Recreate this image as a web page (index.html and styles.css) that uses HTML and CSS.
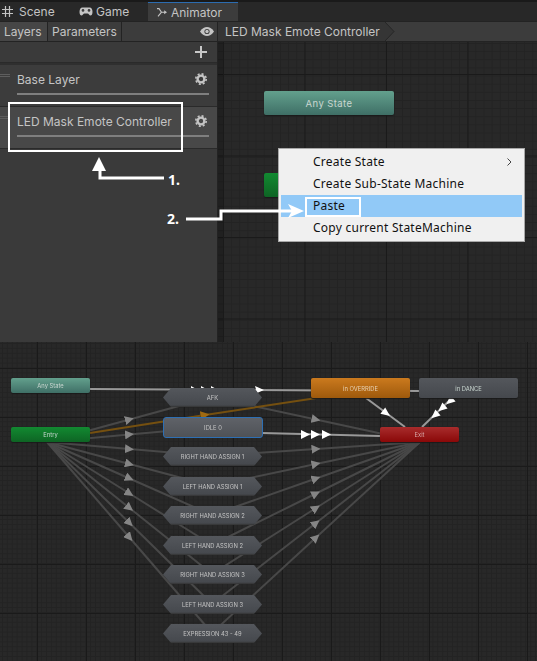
FILE: index.html
```html
<!DOCTYPE html>
<html lang="en">
<head>
    <meta charset="UTF-8">
    <meta name="viewport" content="width=device-width, initial-scale=1.0">
    <title>Animator</title>
    <link rel="stylesheet" href="styles.css">
</head>
<body>
    <div class="page">
        <div class="editor">
            <div class="tabs">
                <div class="tab tab-scene">
                    <svg class="tab-icon" width="11" height="11" viewBox="0 0 11 11"><path d="M3.5 0V11M7.5 0V11M0 3.5H11M0 7.5H11" stroke="#c4c4c4" stroke-width="1.2" fill="none"/></svg>
                    <span>Scene</span>
                </div>
                <div class="tab tab-game">
                    <svg class="tab-icon" width="14" height="9" viewBox="0 0 14 9"><path d="M3.5 0.5H10.5C12.5 0.5 13.5 2.5 13.5 5C13.5 7.5 12.5 8.5 11.5 8.5C10.2 8.5 9.8 6.5 8.5 6.5H5.5C4.2 6.5 3.8 8.5 2.5 8.5C1.5 8.5 0.5 7.5 0.5 5C0.5 2.5 1.5 0.5 3.5 0.5Z" fill="#c4c4c4"/><circle cx="4" cy="3.4" r="1.3" fill="#3c3c3c"/><circle cx="10" cy="3.4" r="1.3" fill="#3c3c3c"/></svg>
                    <span>Game</span>
                </div>
                <div class="tab tab-animator">
                    <svg class="tab-icon" width="10" height="9" viewBox="0 0 10 9"><path d="M0 0.6H2L4.5 4.2L1 8.4M4.5 4.2H8" stroke="#c4c4c4" stroke-width="1.1" fill="none"/><path d="M7.2 2.2L10 4.2L7.2 6.2Z" fill="#c4c4c4"/></svg>
                    <span>Animator</span>
                </div>
            </div>
            <div class="workspace">
                <div class="sidebar">
                    <div class="side-tabs">
                        <span class="side-tab side-tab-layers">Layers</span>
                        <span class="side-tab side-tab-params">Parameters</span>
                        <svg class="eye" width="14" height="9" viewBox="0 0 14 9"><path d="M0 4.5C2.5 1 4.5 0 7 0C9.5 0 11.5 1 14 4.5C11.5 8 9.5 9 7 9C4.5 9 2.5 8 0 4.5Z" fill="#c4c4c4"/><circle cx="7" cy="4.5" r="2.6" fill="#3c3c3c"/><circle cx="7" cy="4.5" r="1.7" fill="#c4c4c4"/></svg>
                    </div>
                    <div class="add-row">
                        <svg width="12" height="12" viewBox="0 0 12 12"><path d="M6 0V12M0 6H12" stroke="#c8c8c8" stroke-width="2"/></svg>
                    </div>
                    <div class="layer">
                        <span class="handle"></span>
                        <div class="layer-head">
                            <span class="layer-name">Base Layer</span>
                            <svg class="gear" width="12" height="12" viewBox="0 0 12 12"><circle cx="6" cy="6" r="3.4" fill="none" stroke="#c4c4c4" stroke-width="2.4"/><circle cx="6" cy="6" r="5.2" fill="none" stroke="#c4c4c4" stroke-width="1.6" stroke-dasharray="2.05 2.03"/></svg>
                        </div>
                        <div class="weight"></div>
                    </div>
                    <div class="layer layer-selected">
                        <span class="handle"></span>
                        <div class="layer-head">
                            <span class="layer-name">LED Mask Emote Controller</span>
                            <svg class="gear" width="12" height="12" viewBox="0 0 12 12"><circle cx="6" cy="6" r="3.4" fill="none" stroke="#c4c4c4" stroke-width="2.4"/><circle cx="6" cy="6" r="5.2" fill="none" stroke="#c4c4c4" stroke-width="1.6" stroke-dasharray="2.05 2.03"/></svg>
                        </div>
                        <div class="weight"></div>
                    </div>
                </div>
                <div class="main">
                    <div class="crumbs">
                        <div class="crumb">LED Mask Emote Controller</div>
                        <svg class="crumb-tip" width="10" height="19" viewBox="0 0 10 19"><path d="M0 0L9 9.5L0 19Z" fill="#353535"/><path d="M0 0L9 9.5L0 19" fill="none" stroke="#262626"/></svg>
                    </div>
                    <div class="graph graph-top">
                        <div class="state any-state">Any State</div>
                        <div class="state entry"></div>
                    </div>
                </div>
            </div>

            <div class="menu">
                <div class="menu-item">Create State<svg class="menu-arrow" width="5" height="8" viewBox="0 0 5 8"><path d="M0.5 0.5L4 4L0.5 7.5" fill="none" stroke="#444"/></svg></div>
                <div class="menu-item">Create Sub-State Machine</div>
                <div class="menu-item menu-item-active">Paste</div>
                <div class="menu-item">Copy current StateMachine</div>
            </div>

            <div class="mark mark-layer"></div>
            <div class="mark mark-paste"></div>
            <svg class="pointers" width="537" height="342" viewBox="0 0 537 342">
                <path d="M164 178H100V168" fill="none" stroke="#fff" stroke-width="3"/>
                <path d="M99 157L106 171H92Z" fill="#fff"/>
                <path d="M186 219H221V211H292" fill="none" stroke="#fff" stroke-width="3"/>
                <path d="M304 211L288 204L292 211L288 218Z" fill="#fff"/>
            </svg>
            <span class="step step-one">1.</span>
            <span class="step step-two">2.</span>
        </div>

        <div class="graph graph-bottom">
            <svg class="edges" width="537" height="319" viewBox="0 342 537 319">
                <defs>
                    <marker id="tip" markerUnits="userSpaceOnUse" markerWidth="9" markerHeight="9" refX="4.5" refY="4.5" orient="auto"><path d="M0 0L9 4.5L0 9Z" fill="#858585"/></marker>
                    <marker id="tip-amber" markerUnits="userSpaceOnUse" markerWidth="9" markerHeight="9" refX="4.5" refY="4.5" orient="auto"><path d="M0 0L9 4.5L0 9Z" fill="#a06a12"/></marker>
                </defs>
                <g class="edge">
                    <path d="M47 442L129.5 419.5L212 397"/>
                    <path d="M47 442L129.5 434.5L212 427"/>
                    <path d="M47 442L129.5 449L212 456"/>
                    <path d="M47 442L129.5 464L212 486"/>
                    <path d="M47 442L129.5 478.5L212 515"/>
                    <path d="M47 442L129.5 493.5L212 545"/>
                    <path d="M47 442L129.5 508L212 574"/>
                    <path d="M47 442L129.5 523L212 604"/>
                    <path d="M47 442L129.5 537.5L212 633"/>
                    <path d="M212 397L316 419.5L420 442"/>
                    <path d="M212 456L316 449L420 442"/>
                    <path d="M212 486L316 464L420 442"/>
                    <path d="M212 515L316 478.5L420 442"/>
                    <path d="M212 545L316 493.5L420 442"/>
                    <path d="M212 574L316 508L420 442"/>
                    <path d="M212 604L316 523L420 442"/>
                    <path d="M212 633L316 537.5L420 442"/>
                </g>
                <path class="edge-amber" d="M90 433L205 415L330 396"/>
                <path class="edge-bright" d="M90 389L419 391"/>
                <path class="edge-bright" d="M262 433L380 436"/>
                <path class="edge-bright" d="M366 398L405 427"/>
                <path class="edge-bright" d="M452 398L422 427"/>
                <g fill="#fff">
                    <path d="M191 386L198 390L191 394Z"/>
                    <path d="M201 386L208 390L201 394Z"/>
                    <path d="M211 386L218 390L211 394Z"/>
                    <path d="M255 386L264 390L257 393Z"/>
                    <path d="M301 430L310 434.5L301 439Z"/>
                    <path d="M311 430L320 434.5L311 439Z"/>
                    <path d="M322 430L331 434.5L322 439Z"/>
                    <path d="M390 416L380.4 413.8L385.2 407.4Z"/>
                    <path d="M446.3 404.3L455.6 401.4L450.4 395.4Z"/>
                    <path d="M438.3 411.3L447.6 408.4L442.4 402.4Z"/>
                    <path d="M431.3 418.3L440.6 415.4L435.4 409.4Z"/>
                </g>
            </svg>
            <div class="state any-state small-state any-state-lg">Any State</div>
            <div class="state entry small-state entry-lg">Entry</div>
            <div class="state exit small-state">Exit</div>
            <div class="state override small-state">in OVERRIDE</div>
            <div class="state dance small-state">in DANCE</div>
            <div class="hex hex-afk">AFK</div>
            <div class="idle">IDLE 0</div>
            <div class="hex hex-r1">RIGHT HAND ASSIGN 1</div>
            <div class="hex hex-l1">LEFT HAND ASSIGN 1</div>
            <div class="hex hex-r2">RIGHT HAND ASSIGN 2</div>
            <div class="hex hex-l2">LEFT HAND ASSIGN 2</div>
            <div class="hex hex-r3">RIGHT HAND ASSIGN 3</div>
            <div class="hex hex-l3">LEFT HAND ASSIGN 3</div>
            <div class="hex hex-ex">EXPRESSION 43 - 49</div>
        </div>
    </div>
</body>
</html>
```

FILE: styles.css
```css
* {
    box-sizing: border-box;
}
html, body {
    margin: 0;
    background: #282828;
}
.page {
    width: 537px;
    height: 661px;
    display: flex;
    flex-direction: column;
    overflow: hidden;
    font-family: Inter, "Liberation Sans", sans-serif;
    color: #c4c4c4;
}
.editor {
    position: relative;
    height: 342px;
    display: flex;
    flex-direction: column;
}

/* window tabs */
.tabs {
    height: 21px;
    display: flex;
    background: #282828;
    border-top: 2px solid #1a1a1a;
    font-size: 12px;
}
.tab {
    display: flex;
    align-items: center;
}
.tab-scene {
    width: 79px;
    padding-left: 2px;
    gap: 6px;
}
.tab-game {
    width: 69px;
    gap: 3px;
}
.tab-animator {
    width: 90px;
    padding-left: 9px;
    gap: 4px;
    background: #3c3c3c;
    border-top: 1px solid #2c6cb0;
}

.workspace {
    flex: 1;
    display: flex;
    min-height: 0;
}

/* layers panel */
.sidebar {
    width: 218px;
    background: #3a3a3a;
    border-right: 1px solid #232323;
    display: flex;
    flex-direction: column;
}
.side-tabs {
    height: 21px;
    display: flex;
    align-items: center;
    background: #3c3c3c;
    border-top: 1px solid #232323;
    border-bottom: 1px solid #232323;
    font-size: 12px;
}
.side-tab {
    height: 100%;
    display: flex;
    align-items: center;
    border-right: 1px solid #232323;
}
.side-tab-layers {
    width: 48px;
    padding-left: 4px;
    background: #464646;
}
.side-tab-params {
    width: 74px;
    padding-left: 4px;
    background: #3c3c3c;
}
.eye {
    margin-left: auto;
    margin-right: 3px;
}
.add-row {
    height: 21px;
    display: flex;
    align-items: center;
    justify-content: flex-end;
    padding-right: 10px;
    background: #3a3a3a;
    border-bottom: 1px solid #2a2a2a;
}
.layer {
    position: relative;
    height: 44px;
    padding: 6px 8px 0 17px;
    background: #3c3c3c;
    border-top: 2px solid #2f2f2f;
    border-bottom: 1px solid #2a2a2a;
}
.layer-selected {
    height: 42px;
    padding-top: 6px;
    border-top: 0;
    background: #484848;
}
.layer-head {
    display: flex;
    align-items: center;
    justify-content: space-between;
    height: 16px;
    font-size: 12px;
}
.gear {
    margin-right: 2px;
}
.weight {
    height: 2px;
    margin-top: 6px;
    background: #7f7f7f;
}
.handle {
    position: absolute;
    left: 0;
    top: 9px;
    width: 10px;
    height: 3px;
    border-top: 1px solid #5e5e5e;
    border-bottom: 1px solid #5e5e5e;
}

/* graph */
.main {
    flex: 1;
    display: flex;
    flex-direction: column;
    min-width: 0;
}
.crumbs {
    height: 21px;
    display: flex;
    background: #3c3c3c;
    border-top: 1px solid #232323;
    border-bottom: 1px solid #232323;
}
.crumb {
    width: 167px;
    padding-left: 7px;
    line-height: 19px;
    white-space: nowrap;
    background: #353535;
    font-size: 12px;
}
.graph {
    position: relative;
    background-color: #282828;
    background-image:
        linear-gradient(#1a1a1a 1px, transparent 1px),
        linear-gradient(90deg, #1a1a1a 1px, transparent 1px),
        linear-gradient(#232323 1px, transparent 1px),
        linear-gradient(90deg, #232323 1px, transparent 1px);
}
.graph-top {
    flex: 1;
    background-size: 81.5px 81.5px, 81.5px 81.5px, 8.15px 8.15px, 8.15px 8.15px;
    background-position: 0 32px, 5px 0, 0 1px, 5px 0;
    box-shadow: inset 5px 0 0 rgba(0, 0, 0, 0.2);
}
.graph-bottom {
    flex: 1;
    background-size: 49px 49px, 49px 49px, 4.9px 4.9px, 4.9px 4.9px;
    background-position: 0 26px, 37px 0, 0 1px, 2px 0;
    filter: blur(0.35px);
}
.edges {
    position: absolute;
    left: 0;
    top: 0;
}
.edge path {
    fill: none;
    stroke: #484848;
    stroke-width: 2;
    marker-mid: url(#tip);
}
.edge-amber {
    fill: none;
    stroke: #755010;
    stroke-width: 2;
    marker-mid: url(#tip-amber);
}
.edge-bright {
    fill: none;
    stroke: #999;
    stroke-width: 2;
}

/* nodes */
.state {
    position: absolute;
    display: flex;
    align-items: center;
    justify-content: center;
    border-radius: 2px;
    font-size: 9.5px;
    letter-spacing: 0.4px;
    color: #c9d6d0;
    box-shadow: 0 1px 1px #1a1a1a;
}
.any-state {
    left: 46px;
    top: 49px;
    width: 130px;
    height: 24px;
    background: linear-gradient(#63a08d, #3f6f66);
}
.entry {
    left: 46px;
    top: 131px;
    width: 130px;
    height: 24px;
    background: linear-gradient(#128a31, #0e6424);
}
.small-state {
    font-size: 5.8px;
    letter-spacing: 0;
    height: 15px;
}
.any-state-lg {
    left: 11px;
    top: 36px;
    width: 79px;
}
.entry-lg {
    left: 11px;
    top: 85px;
    width: 79px;
}
.exit {
    left: 380px;
    top: 85px;
    width: 79px;
    color: #d6a8a8;
    background: linear-gradient(#a82c2c, #8a0808);
}
.override {
    left: 311px;
    top: 36px;
    width: 99px;
    height: 20px;
    color: #e8d2b4;
    background: linear-gradient(#cb7a1e, #9e590c);
}
.dance {
    left: 419px;
    top: 36px;
    width: 99px;
    height: 20px;
    background: linear-gradient(#54575c, #45484d);
}
.hex {
    position: absolute;
    left: 163px;
    width: 99px;
    height: 19px;
    display: flex;
    align-items: center;
    justify-content: center;
    font-size: 5.8px;
    color: #c4c4c4;
    background: linear-gradient(#54575c, #46494e 90%, #333 100%);
    clip-path: polygon(8px 0, 91px 0, 100% 50%, 91px 100%, 8px 100%, 0 50%);
}
.hex-afk { top: 46px; }
.hex-r1 { top: 105px; }
.hex-l1 { top: 135px; }
.hex-r2 { top: 164px; }
.hex-l2 { top: 194px; }
.hex-r3 { top: 223px; }
.hex-l3 { top: 253px; }
.hex-ex { top: 282px; }
.idle {
    position: absolute;
    left: 163px;
    top: 75px;
    width: 100px;
    height: 21px;
    display: flex;
    align-items: center;
    justify-content: center;
    font-size: 5.8px;
    color: #c4c4c4;
    background: linear-gradient(#5f6268, #4f5257);
    border: 1px solid #2d6fb4;
    border-radius: 3px;
}

/* context menu */
.menu {
    position: absolute;
    left: 278px;
    top: 148px;
    width: 247px;
    height: 94px;
    padding: 2px 2px 0;
    background: #f0f0f0;
    border: 1px solid #a8a8a8;
    font-family: "Noto Sans", "Liberation Sans", sans-serif;
    font-size: 12px;
    letter-spacing: 0.25px;
    color: #111;
}
.menu-item {
    position: relative;
    height: 22px;
    padding-left: 32px;
    line-height: 21px;
}
.menu-item-active {
    background: #91c9f7;
}
.menu-arrow {
    position: absolute;
    right: 10px;
    top: 7px;
}

/* white tutorial marks */
.mark {
    position: absolute;
    border: 2px solid #fff;
}
.mark-layer {
    left: 8px;
    top: 102px;
    width: 175px;
    height: 50px;
}
.mark-paste {
    left: 305px;
    top: 197px;
    width: 56px;
    height: 20px;
}
.pointers {
    position: absolute;
    left: 0;
    top: 0;
    pointer-events: none;
}
.step {
    position: absolute;
    font-family: "Noto Sans", "Liberation Sans", sans-serif;
    font-size: 14px;
    font-weight: 700;
    color: #fff;
}
.step-one {
    left: 168px;
    top: 170px;
}
.step-two {
    left: 167px;
    top: 209px;
}
```
